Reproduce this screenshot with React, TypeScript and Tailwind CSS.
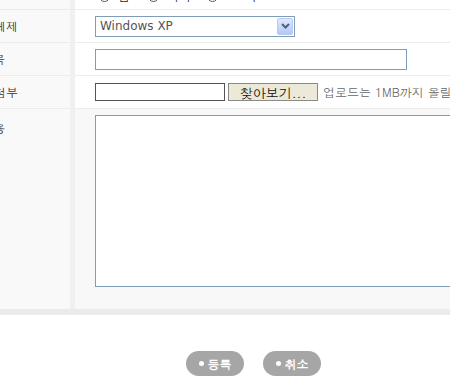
import { useState } from "react";

const kr = "font-['Dotum','Noto_Sans_CJK_KR',sans-serif]";

function Label({ children, top }: { children: React.ReactNode; top?: boolean }) {
  return (
    <div
      className={`bg-[#f9f9f9] pl-0 text-[12px] text-[#333] ${top ? "pt-[10px]" : "flex items-center"}`}
    >
      {children}
    </div>
  );
}

function Spaced({ a, b }: { a: string; b: string }) {
  return (
    <span className="flex w-[35px] justify-between">
      <span>{a}</span>
      <span>{b}</span>
    </span>
  );
}

export default function App() {
  const [os, setOs] = useState("Windows XP");

  return (
    <div className={`h-[390px] w-[450px] overflow-hidden bg-white ${kr}`}>
      <div className="-ml-[30px] w-[600px]">
        <div className="grid grid-cols-[100px_5px_1fr] border-b-[6px] border-[#ebebeb]">
          {/* top row, mostly scrolled off */}
          <div className="h-[10px] border-b border-[#ececec] bg-[#f9f9f9]" />
          <div className="h-[10px] border-b border-[#ececec] bg-[#f0f0f0]" />
          <div className="flex h-[10px] items-start overflow-hidden border-b border-[#ececec] bg-white pl-[24px] text-[12px] leading-[12px] text-[#222]">
            <div className="flex -translate-y-[10px] items-center gap-[8px]">
              <span className="h-[11px] w-[11px] rounded-full border border-[#555]" />
              <span>남</span>
              <span className="ml-[10px] h-[11px] w-[11px] rounded-full border border-[#555]" />
              <span>여자</span>
              <span className="ml-[8px] h-[11px] w-[11px] rounded-full border border-[#555]" />
              <span className="ml-[22px]">무</span>
            </div>
          </div>

          {/* OS */}
          <Label>
            <div className="flex h-[32px] w-full items-center border-b border-[#ececec]">운영체제</div>
          </Label>
          <div className="bg-[#f0f0f0]" />
          <div className="flex h-[33px] items-center border-b border-[#ececec] bg-white pl-[20px]">
            <label className="relative flex h-[21px] w-[200px] items-center border border-[#7f9db9] bg-white pl-[4px] font-['DejaVu_Sans',sans-serif] text-[12px] text-[#555]">
              <select
                value={os}
                onChange={(e) => setOs(e.target.value)}
                className="absolute inset-0 opacity-0"
              >
                <option>Windows XP</option>
                <option>Windows 2000</option>
                <option>Windows Vista</option>
              </select>
              <span className="flex-1">{os}</span>
              <span className="mr-[1px] flex h-[17px] w-[16px] items-center justify-center rounded-[2px] border border-[#b9c9ef] bg-gradient-to-b from-[#dfe8fd] to-[#b4c8f5]">
                <svg width="9" height="6" viewBox="0 0 9 6">
                  <path d="M1 1 L4.5 4.5 L8 1" fill="none" stroke="#4d6185" strokeWidth="2" />
                </svg>
              </span>
            </label>
          </div>

          {/* subject */}
          <Label>
            <div className="flex h-[33px] w-full items-center border-b border-[#ececec]">
              <Spaced a="제" b="목" />
            </div>
          </Label>
          <div className="bg-[#f0f0f0]" />
          <div className="flex h-[33px] items-center border-b border-[#ececec] bg-white pl-[20px]">
            <input className="h-[21px] w-[312px] border border-[#7f9db9] bg-white outline-none" />
          </div>

          {/* file */}
          <Label>
            <div className="flex h-[33px] w-full items-center border-b border-[#ececec]">파일첨부</div>
          </Label>
          <div className="bg-[#f0f0f0]" />
          <div className="flex h-[33px] items-center border-b border-[#ececec] bg-white pl-[20px]">
            <input className="h-[18px] w-[130px] border border-[#555] bg-white outline-none" />
            <button className="ml-[3px] h-[18px] w-[90px] border border-[#8a8a8a] bg-[#ece9d8] text-[13px] leading-none text-[#111]">
              찾아보기...
            </button>
            <span className="ml-[5px] whitespace-nowrap text-[12px] text-[#666]">
              업로드는 1MB까지 올릴 수 있습니다.
            </span>
          </div>

          {/* content */}
          <Label top>
            <Spaced a="내" b="용" />
          </Label>
          <div className="bg-[#f0f0f0]" />
          <div className="h-[200px] bg-[#f8f8f8] pl-[20px] pt-[6px]">
            <textarea className="h-[172px] w-[460px] resize-none border border-[#7f9db9] bg-white outline-none" />
          </div>
        </div>
      </div>

      <div className="mt-[36px] flex justify-center gap-[19px] pl-[57px]">
        <button className="flex h-[25px] w-[58px] items-center justify-center gap-[4px] rounded-full bg-[#a6a6a6] text-[12px] font-bold text-white">
          <span className="h-[5px] w-[5px] rounded-full bg-white" />
          등록
        </button>
        <button className="flex h-[25px] w-[58px] items-center justify-center gap-[4px] rounded-full bg-[#a6a6a6] text-[12px] font-bold text-white">
          <span className="h-[5px] w-[5px] rounded-full bg-white" />
          취소
        </button>
      </div>
    </div>
  );
}
